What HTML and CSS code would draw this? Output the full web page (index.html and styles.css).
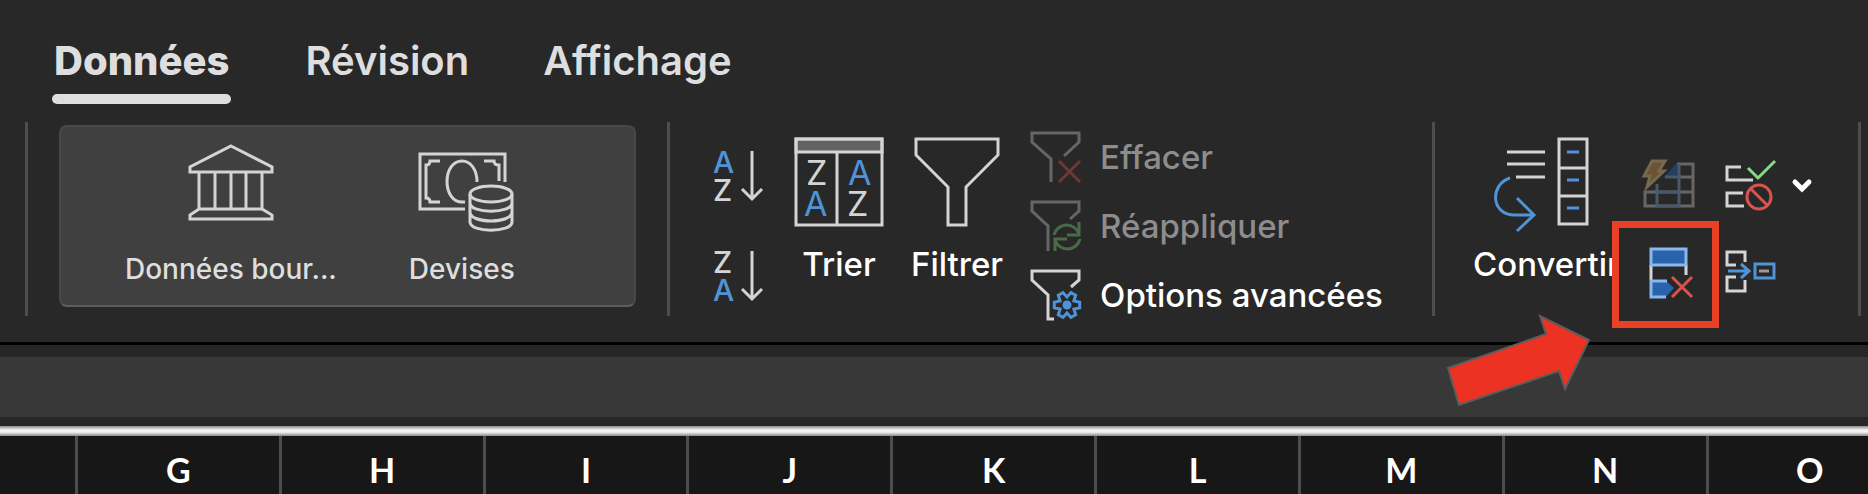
FILE: index.html
```html
<!DOCTYPE html>
<html lang="fr">
<head>
  <meta charset="utf-8">
  <title>Classeur - Données</title>
  <link rel="stylesheet" href="styles.css">
</head>

<body>

  <nav class="tabs">
    <a href="#donnees" class="tab active">Données</a>
    <a href="#revision" class="tab">Révision</a>
    <a href="#affichage" class="tab">Affichage</a>
  </nav>

  <div class="ribbon">

    <div class="group types">
      <div class="gallery">
        <button class="type">
          <svg width="86" height="88" viewBox="0 0 86 88">
            <path d="M43 2L84 23V28H2V23ZM11 28V65M27 28V65M43 28V65M58 28V65M74 28V65M11 65H74L84 71V75H2V71Z"/>
          </svg>
          <span>Données bour...</span>
        </button>
        <button class="type">
          <svg width="96" height="88" viewBox="-4 -8 96 88">
            <path d="M47 57H2V2H87V30M22 9H12Q12 13 8 13V46Q12 46 12 50H22M66 9H76Q76 13 81 13V29M59 30C59 18 53 9 44 9S29 18 29 29.5S35 50 44 50H47"/>
            <ellipse cx="73" cy="42" rx="21" ry="8"/>
            <path d="M52 42V70C52 81 94 81 94 70V42M52 51C52 62 94 62 94 51M52 60C52 72 94 72 94 60"/>
          </svg>
          <span>Devises</span>
        </button>
      </div>
    </div>

    <div class="group sort">
      <div class="sort-order">
        <button aria-label="Trier de A à Z">
          <svg width="50" height="52" viewBox="0 0 50 52">
            <text class="letter blue-letter" x="0" y="23">A</text>
            <text class="letter" x="0" y="51">Z</text>
            <path d="M39 1V49M29 39L39 49L49 39"/>
          </svg>
        </button>
        <button aria-label="Trier de Z à A">
          <svg width="50" height="52" viewBox="0 0 50 52">
            <text class="letter" x="0" y="23">Z</text>
            <text class="letter blue-letter" x="0" y="51">A</text>
            <path d="M39 1V49M29 39L39 49L49 39"/>
          </svg>
        </button>
      </div>
      <button class="big">
        <svg width="90" height="90" viewBox="0 0 90 90">
          <rect class="band" x="2" y="2" width="86" height="13"/>
          <path d="M2 2H88V88H2ZM43 15V88"/>
          <text class="letter thin" x="12" y="48">Z</text>
          <text class="letter thin blue-letter" x="10" y="79">A</text>
          <text class="letter thin blue-letter" x="54" y="48">A</text>
          <text class="letter thin" x="53" y="79">Z</text>
        </svg>
        <span>Trier</span>
      </button>
      <button class="big">
        <svg width="86" height="90" viewBox="0 0 86 90">
          <path d="M2 2H84V18L52 50V88H34V50L2 18Z"/>
        </svg>
        <span>Filtrer</span>
      </button>
      <div class="filter-list">
        <button disabled>
          <svg width="52" height="52" viewBox="0 0 52 52">
            <path d="M21 51V28L2 11V2H49V11L34 25"/>
            <path class="red" d="M29 30L50 51M50 30L29 51"/>
          </svg>
          <span>Effacer</span>
        </button>
        <button disabled>
          <svg width="52" height="52" viewBox="0 0 52 52">
            <path d="M18 51V26L2 11V2H49V11L40 19"/>
            <path class="green" d="M24 35A13 13 0 0 1 49 34M49 22V35H37M50 39A13 13 0 0 1 25 40M25 51V39H37"/>
          </svg>
          <span>Réappliquer</span>
        </button>
        <button>
          <svg width="52" height="52" viewBox="0 0 52 52">
            <path d="M24 50H18V26L2 11V2H49V11L41 18"/>
            <path class="blue" d="M49.7 33.3V38.7L43.9 40L45.7 45.7L41 48.4L37 44L33 48.4L28.3 45.7L30.1 40L24.3 38.7V33.3L30.1 32L28.3 26.3L33 23.6L37 28L41 23.6L45.7 26.3L43.9 32Z"/>
            <circle class="hub" cx="37" cy="36" r="3"/>
          </svg>
          <span>Options avancées</span>
        </button>
      </div>
    </div>

    <div class="group tools">
      <button class="big convert">
        <svg width="96" height="96" viewBox="0 0 96 96">
          <path d="M13 15H51M13 27H51M22 40H51M65 2H93V87H65ZM65 31H93M65 59H93"/>
          <path class="blue" d="M73 15H85M73 43H85M73 71H85M16 41C-4 47 -4 78 21 78H40M23 61L40 78L23 94"/>
        </svg>
        <span>Convertir</span>
      </button>
      <div class="tool-grid">
        <button class="flash" disabled aria-label="Remplissage instantané">
          <svg width="52" height="50" viewBox="0 0 52 50">
            <path d="M34 4H50V46H2V32H50M36 17H50"/>
            <path class="slate" d="M33 4H36V17H21Z"/>
            <path class="slate-line" d="M14 24V46H36V4M14 32H36M22 17H36"/>
            <path class="bolt" d="M9 1H22L16 11H21L4 27L7 16H1Z"/>
          </svg>
        </button>
        <button aria-label="Validation des données">
          <svg width="52" height="50" viewBox="0 0 52 50">
            <path d="M16 7H2V20H28M18 33H2V46H19"/>
            <path class="check" d="M23 8L33 18L50 1"/>
            <path class="red" d="M26 29L42 45"/>
            <circle class="red" cx="34" cy="37" r="12"/>
          </svg>
        </button>
        <button class="more" aria-label="Plus d'options">
          <svg width="20" height="14" viewBox="0 0 20 14">
            <path d="M3 3L10 10L17 3"/>
          </svg>
        </button>
        <button class="highlight" aria-label="Supprimer les doublons">
          <svg width="45" height="52" viewBox="0 0 45 52">
            <path d="M2 18V33M37 18V28"/>
            <path class="row-fill" d="M2 2H37V18H2Z"/>
            <path class="row-shape" d="M2 34H17L25 41L17 50H2Z"/>
            <path class="row-line" d="M18 34H2V50H17"/>
            <path class="red" d="M23 30L43 50M43 30L23 50"/>
          </svg>
        </button>
        <button class="consolidate" aria-label="Consolider">
          <svg width="52" height="43" viewBox="0 0 52 43">
            <path d="M11 15H2V2H20V12M11 27H2V41H20V30"/>
            <path class="blue" d="M3 21H23M16 14L24 21L16 28M30 14H49V28H30Z"/>
            <path class="dim" d="M34 21H44"/>
          </svg>
        </button>
      </div>
      <svg class="arrow" width="148" height="96" viewBox="0 0 148 96">
        <path d="M3 54L101 20L95 2L144 26L120 75L114 57L14 91Z"/>
      </svg>
    </div>

    <div class="group"></div>
  </div>

  <div class="formula-bar"></div>

  <div class="sheet">
    <table>
      <tr>
        <th class="first"></th>
        <th>G</th>
        <th>H</th>
        <th>I</th>
        <th>J</th>
        <th>K</th>
        <th>L</th>
        <th>M</th>
        <th>N</th>
        <th>O</th>
      </tr>
    </table>
  </div>

</body>
</html>
```
FILE: styles.css
```css
* {
  box-sizing: border-box;
}

body {
  margin: 0;
  background: #282828;
  color: #fff;
  font-family: Inter, "Liberation Sans", sans-serif;
  overflow: hidden;
}

button {
  display: flex;
  align-items: center;
  margin: 0;
  padding: 0;
  border: none;
  background: none;
  color: #fff;
  font-family: inherit;
  font-size: 33px;
  font-weight: 500;
  line-height: 36px;
  white-space: nowrap;
}

svg {
  display: block;
  flex-shrink: 0;
  overflow: visible;
  fill: none;
  stroke: #d4d4d4;
  stroke-width: 3;
}

/* tabs */
.tabs {
  display: flex;
  gap: 74px;
  height: 122px;
  padding: 36px 52px 0;
}

.tab {
  color: #dedede;
  font-size: 40px;
  font-weight: 600;
  line-height: 50px;
  text-decoration: none;
}

.tab.active {
  padding: 0 2px;
  font-weight: 800;
}

.tab.active::after {
  content: "";
  display: block;
  height: 10px;
  margin: 8px -2px 0;
  background: #dedede;
  border-radius: 5px;
}

/* ribbon */
.ribbon {
  display: flex;
  align-items: flex-start;
  height: 223px;
  padding-left: 25px;
}

.group {
  display: flex;
  align-items: flex-start;
  flex-shrink: 0;
  height: 194px;
  border-left: 3px solid #4d4d4d;
}

.types {
  padding: 3px 31px 0;
}

.gallery {
  display: flex;
  align-items: flex-start;
  gap: 72px;
  width: 577px;
  height: 182px;
  padding: 17px 64px 0;
  background: #404040;
  border: 2px solid #484848;
  border-bottom-color: #5e5e5e;
  border-radius: 8px;
}

.type {
  flex-direction: column;
  gap: 19px;
  color: #dedede;
  font-size: 28px;
}

.sort {
  width: 765px;
  padding: 15px 0 0 43px;
}

.sort-order {
  display: flex;
  flex-direction: column;
  gap: 48px;
  margin: 13px 31px 0 0;
}

.letter {
  fill: #d4d4d4;
  stroke: none;
  font-size: 30px;
  font-weight: 500;
}

.thin {
  font-size: 34px;
  font-weight: 400;
}

.blue-letter {
  fill: #4f94d8;
}

.band {
  fill: #636363;
}

.big {
  flex-direction: column;
  gap: 19px;
  margin-right: 27px;
}

.filter-list {
  display: flex;
  flex-direction: column;
  gap: 17px;
  margin-top: -6px;
}

.filter-list button {
  gap: 18px;
}

button:disabled {
  color: #8d8d8d;
}

button:disabled svg {
  stroke: #666;
}

.red {
  stroke: #d9534f;
}

:disabled .red {
  stroke: #6e3835;
}

.green {
  stroke: #4a6b4a;
}

.blue {
  stroke: #4f94d8;
}

.hub {
  fill: #4f94d8;
  stroke: #4f94d8;
}

.check {
  stroke: #86d986;
}

.dim {
  stroke: #999;
}

.slate {
  fill: #263f5e;
  stroke: none;
}

.slate-line {
  stroke: #48596b;
}

.bolt {
  fill: #6b5334;
  stroke: #75694f;
}

.row-fill {
  fill: #2a62ae;
  stroke: #8ab8ea;
}

.row-shape {
  fill: #2a62ae;
  stroke: none;
}

.row-line {
  stroke: #8ab8ea;
}

/* tools on the right */
.tools {
  position: relative;
  width: 426px;
  padding-left: 38px;
}

.convert {
  align-items: flex-start;
  width: 139px;
  margin: 15px 0 0;
  gap: 13px;
}

.convert svg {
  margin-left: 21px;
}

.tool-grid {
  display: grid;
  grid-template-columns: 107px 51px 20px;
  grid-template-rows: 99px 107px;
  column-gap: 6px;
}

.tool-grid button {
  justify-content: center;
  align-items: flex-end;
  padding-bottom: 11px;
}

.tool-grid .flash {
  padding-left: 6px;
}

.tool-grid .more {
  margin-left: 20px;
  padding-bottom: 28px;
}

.more svg {
  stroke: #fff;
  stroke-width: 5;
  stroke-linecap: round;
}

.tool-grid .highlight {
  position: relative;
  align-items: center;
  padding: 0 0 4px 12px;
  background: #282828;
  border: 7px solid #ea4025;
}

.tool-grid .consolidate {
  align-items: center;
  padding-bottom: 7px;
}

.arrow {
  position: absolute;
  left: 10px;
  top: 192px;
}

.arrow path {
  fill: #ec3323;
  stroke: #5c5c5c;
  stroke-width: 2;
}

/* formula bar and sheet */
.formula-bar {
  height: 81px;
  background: #383838;
  border-top: 12px solid #262626;
  border-bottom: 9px solid #262626;
  box-shadow: 0 -3px #000;
}

.sheet {
  padding-top: 10px;
  background: linear-gradient(#8a8a8a, #f4f4f4 4px, #f4f4f4 6px, #8a8a8a 10px, #171717 10px);
  overflow: hidden;
}

table {
  width: 102.3%;
  table-layout: fixed;
  border-collapse: collapse;
  background: #171717;
}

th {
  height: 72px;
  padding: 0 0 4px;
  border-left: 3px solid #4d4d4d;
  font-family: Lato, sans-serif;
  font-size: 34px;
  font-weight: 700;
  line-height: 40px;
}

.first {
  width: 4%;
  border-left: none;
}
```
